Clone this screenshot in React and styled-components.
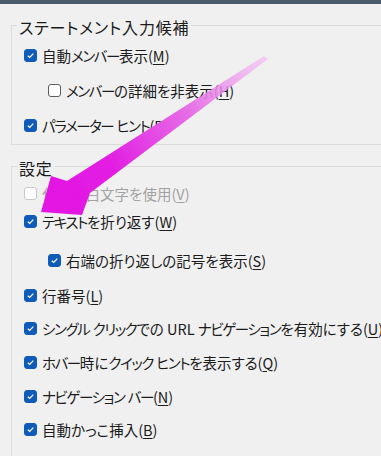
import React from 'react';
import styled, { createGlobalStyle } from 'styled-components';

const GlobalStyle = createGlobalStyle`
  html, body {
    margin: 0;
    padding: 0;
    background: #f0f0f0;
  }
  body {
    font-family: 'Noto Sans CJK JP', 'Noto Sans', sans-serif;
    font-feature-settings: 'palt';
    color: #1b1b1b;
  }
`;

const Page = styled.div`
  position: relative;
  width: 381px;
  height: 456px;
  overflow: hidden;
  background: #f0f0f0;
`;

const TopBar = styled.div`
  height: 4px;
  background: #4c5a6a;
`;

const Group = styled.fieldset`
  margin: ${({ $mt }) => $mt}px 0 0 11px;
  padding: 0 0 ${({ $pb }) => $pb}px 0;
  border: 1px solid #dcdcdc;
  width: 400px;
  min-width: 0;
`;

const Legend = styled.legend`
  margin-left: 5px;
  padding: 3px 2px 0;
  font-size: 16px;
  line-height: 20px;
  letter-spacing: 0.8px;
  color: #1b1b1b;
`;

const Row = styled.label`
  display: flex;
  align-items: center;
  gap: 5px;
  height: ${({ $h }) => $h || 34}px;
  margin-top: ${({ $mt }) => $mt || 0}px;
  padding-left: ${({ $sub }) => ($sub ? 36 : 12)}px;
  font-size: 14.5px;
  white-space: nowrap;
  color: ${({ $disabled }) => ($disabled ? '#a2a2a2' : '#1b1b1b')};
`;

// katakana runs are narrower in the original UI font
const Kana = styled.span`
  letter-spacing: -1.4px;
`;

const Box = styled.span`
  flex: none;
  width: 13px;
  height: 13px;
  box-sizing: border-box;
  border-radius: 3px;
  display: flex;
  align-items: center;
  justify-content: center;
  background: ${({ $checked }) => ($checked ? '#0f5cb8' : '#ffffff')};
  border: 1px solid
    ${({ $checked, $disabled }) =>
      $checked ? '#0f5cb8' : $disabled ? '#c8c8c8' : '#5c5c5c'};
`;

const Key = styled.span`
  text-decoration: underline;
  text-underline-offset: 2px;
`;

const ArrowLayer = styled.svg`
  position: absolute;
  left: 0;
  top: 0;
  pointer-events: none;
`;

function withKana(text) {
  return text.split(/([\u30A0-\u30FF]+)/).map((part, i) =>
    i % 2 ? <Kana key={i}>{part}</Kana> : part
  );
}

function CheckBox({ checked, disabled }) {
  return (
    <Box $checked={checked} $disabled={disabled}>
      {checked && (
        <svg width="9" height="9" viewBox="0 0 9 9">
          <path d="M1.8 4.7 L3.7 6.5 L7.3 2.6" fill="none" stroke="#fff" strokeWidth="1.2" />
        </svg>
      )}
    </Box>
  );
}

function Option({ label, hotkey, checked = true, disabled, sub, h, mt }) {
  return (
    <Row $sub={sub} $h={h} $mt={mt} $disabled={disabled}>
      <CheckBox checked={checked} disabled={disabled} />
      <span>
        {withKana(label)}(<Key>{hotkey}</Key>)
      </span>
    </Row>
  );
}

function Arrow() {
  return (
    <ArrowLayer width="381" height="456" viewBox="0 0 381 456">
      <defs>
        <linearGradient id="arrowFill" x1="265" y1="57" x2="45" y2="210" gradientUnits="userSpaceOnUse">
          <stop offset="0" stopColor="#f3b8f3" stopOpacity="0.6" />
          <stop offset="0.35" stopColor="#e66ee6" />
          <stop offset="0.7" stopColor="#e21ee2" />
          <stop offset="1" stopColor="#e314e3" />
        </linearGradient>
        <filter id="soft" x="-10%" y="-10%" width="120%" height="120%">
          <feGaussianBlur stdDeviation="0.6" />
        </filter>
      </defs>
      <polygon
        points="264,56 268,59 90,193 82,215 41,212 51,176 67,181"
        fill="url(#arrowFill)"
        filter="url(#soft)"
      />
    </ArrowLayer>
  );
}

export default function App() {
  return (
    <>
      <GlobalStyle />
      <Page>
        <TopBar />
        <Group $mt={10} $pb={1}>
          <Legend>ステートメント入力候補</Legend>
          <Option label="自動メンバー表示" hotkey="M" h={35} mt={1} />
          <Option label="メンバーの詳細を非表示" hotkey="H" checked={false} sub h={35} />
          <Option label="パラメーター ヒント" hotkey="P" h={35} />
        </Group>
        <Group $mt={10} $pb={0}>
          <Legend>設定</Legend>
          <Option label="代替空白文字を使用" hotkey="V" checked={false} disabled mt={-2} />
          <Option label="テキストを折り返す" hotkey="W" mt={-6} />
          <Option label="右端の折り返しの記号を表示" hotkey="S" sub mt={5} />
          <Option label="行番号" hotkey="L" mt={1} />
          <Option label="シングル クリックでの URL ナビゲーションを有効にする" hotkey="U" mt={-1} />
          <Option label="ホバー時にクイック ヒントを表示する" hotkey="Q" />
          <Option label="ナビゲーション バー" hotkey="N" />
          <Option label="自動かっこ挿入" hotkey="B" mt={-1} />
          <Option label="選択範囲がない場合に空白行へのコピーまたは切り取りを適用する" hotkey="A" />
        </Group>
        <Arrow />
      </Page>
    </>
  );
}
